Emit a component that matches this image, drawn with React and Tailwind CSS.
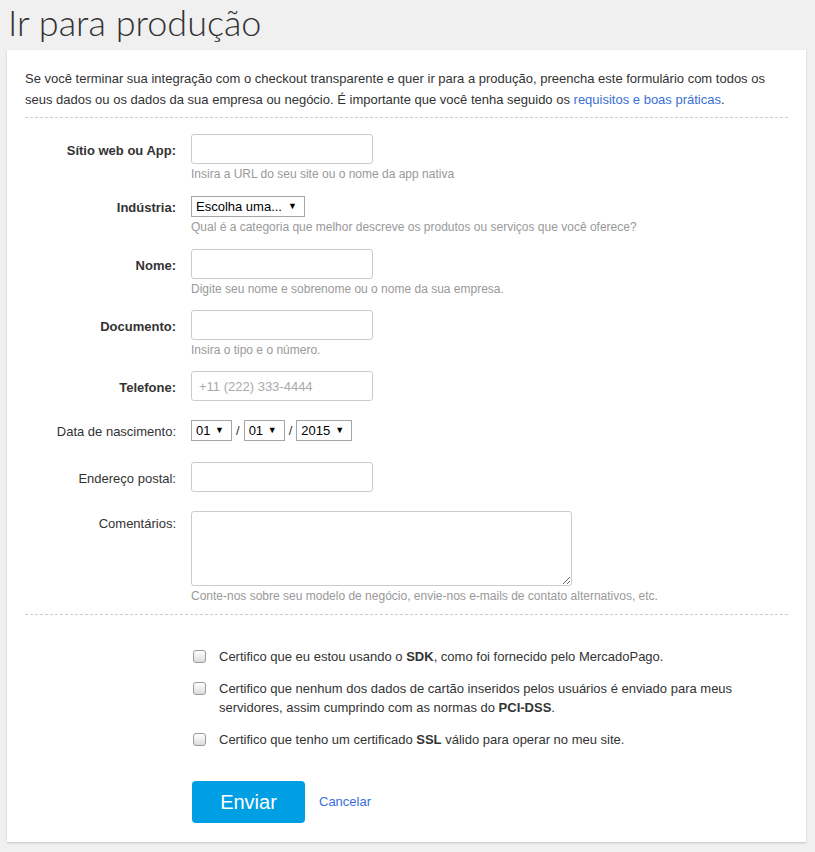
import React from "react";

const font = { fontFamily: '"Liberation Sans", Arial, sans-serif' };

function Help({ children }) {
  return <div className="mt-[2px] text-[12px] leading-[16px] text-[#999]">{children}</div>;
}

function TextInput({ placeholder }) {
  return (
    <input
      type="text"
      placeholder={placeholder}
      className="block w-[182px] h-[30px] rounded-[3px] border border-[#ccc] bg-white px-[7px] text-[13px] text-[#333] placeholder:text-[#aaa] outline-none"
    />
  );
}

function FakeSelect({ text, width }) {
  return (
    <div
      className={`flex h-[21px] items-center justify-between border border-[#a6a6a6] bg-white pl-[4px] pr-[7px] text-[13px] text-black ${width}`}
    >
      <span>{text}</span>
      <span className="text-[9px] leading-none">▼</span>
    </div>
  );
}

function Checkbox() {
  return (
    <span className="mt-[3px] ml-[2px] inline-block h-[13px] w-[13px] shrink-0 rounded-[3px] border border-[#9a9a9a] bg-gradient-to-b from-white to-[#dcdcdc]" />
  );
}

export default function App() {
  return (
    <div className="min-h-[852px] bg-[#f0f0f0] pb-[10px]" style={font}>
      <h1
        className="h-[50px] pl-[8px] text-[36px] font-light leading-[44px] text-[#333]"
        style={{ fontFamily: 'Lato, "Liberation Sans", sans-serif' }}
      >
        Ir para produção
      </h1>
      <div className="ml-[7px] w-[799px] bg-white px-[18px] pt-[18px] pb-[19px] shadow-[0_1px_2px_rgba(0,0,0,0.18)]">
        <p className="text-[13px] leading-[21px] text-[#333]">
          Se você terminar sua integração com o checkout transparente e quer ir para a produção, preencha este formulário com todos os seus dados ou os dados da sua empresa ou negócio. É importante que você tenha seguido os{" "}
          <a className="text-[#3a6fd6]">requisitos e boas práticas</a>.
        </p>
        <div className="mt-[7px] border-t border-dashed border-[#ccc]" />

        <div className="mt-[16px] flex gap-[15px]">
          <div className="w-[151px] shrink-0 pt-[7px] text-right text-[13px] font-bold text-[#333]">Sítio web ou App:</div>
          <div>
            <TextInput />
            <Help>Insira a URL do seu site ou o nome da app nativa</Help>
          </div>
        </div>

        <div className="mt-[14px] flex gap-[15px]">
          <div className="w-[151px] shrink-0 pt-[2px] text-right text-[13px] font-bold text-[#333]">Indústria:</div>
          <div>
            <FakeSelect text="Escolha uma..." width="w-[114px]" />
            <Help>Qual é a categoria que melhor descreve os produtos ou serviços que você oferece?</Help>
          </div>
        </div>

        <div className="mt-[14px] flex gap-[15px]">
          <div className="w-[151px] shrink-0 pt-[7px] text-right text-[13px] font-bold text-[#333]">Nome:</div>
          <div>
            <TextInput />
            <Help>Digite seu nome e sobrenome ou o nome da sua empresa.</Help>
          </div>
        </div>

        <div className="mt-[13px] flex gap-[15px]">
          <div className="w-[151px] shrink-0 pt-[7px] text-right text-[13px] font-bold text-[#333]">Documento:</div>
          <div>
            <TextInput />
            <Help>Insira o tipo e o número.</Help>
          </div>
        </div>

        <div className="mt-[13px] flex gap-[15px]">
          <div className="w-[151px] shrink-0 pt-[7px] text-right text-[13px] font-bold text-[#333]">Telefone:</div>
          <div>
            <TextInput placeholder="+11 (222) 333-4444" />
          </div>
        </div>

        <div className="mt-[19px] flex gap-[15px]">
          <div className="w-[151px] shrink-0 pt-[2px] text-right text-[13px] text-[#333]">Data de nascimento:</div>
          <div className="flex items-center">
            <FakeSelect text="01" width="w-[41px]" />
            <span className="mx-[4px] text-[13px] text-[#333]">/</span>
            <FakeSelect text="01" width="w-[41px]" />
            <span className="mx-[4px] text-[13px] text-[#333]">/</span>
            <FakeSelect text="2015" width="w-[56px]" />
          </div>
        </div>

        <div className="mt-[20px] flex gap-[15px]">
          <div className="w-[151px] shrink-0 pt-[7px] text-right text-[13px] text-[#333]">Endereço postal:</div>
          <div>
            <TextInput />
          </div>
        </div>

        <div className="mt-[19px] flex gap-[15px]">
          <div className="w-[151px] shrink-0 pt-[3px] text-right text-[13px] text-[#333]">Comentários:</div>
          <div>
            <textarea className="block h-[75px] w-[381px] rounded-[3px] border border-[#ccc] bg-white p-[6px] text-[13px] outline-none" />
            <Help>Conte-nos sobre seu modelo de negócio, envie-nos e-mails de contato alternativos, etc.</Help>
          </div>
        </div>

        <div className="mt-[10px] border-t border-dashed border-[#ccc]" />

        <div className="ml-[166px] mt-[32px] flex flex-col gap-[13px] text-[13px] leading-[19px] text-[#333]">
          <label className="flex gap-[13px]">
            <Checkbox />
            <span>
              Certifico que eu estou usando o <b>SDK</b>, como foi fornecido pelo MercadoPago.
            </span>
          </label>
          <label className="flex gap-[13px]">
            <Checkbox />
            <span>
              Certifico que nenhum dos dados de cartão inseridos pelos usuários é enviado para meus servidores, assim cumprindo com as normas do <b>PCI-DSS</b>.
            </span>
          </label>
          <label className="flex gap-[13px]">
            <Checkbox />
            <span>
              Certifico que tenho um certificado <b>SSL</b> válido para operar no meu site.
            </span>
          </label>
        </div>

        <div className="ml-[167px] mt-[32px] flex items-center gap-[14px]">
          <button className="h-[42px] w-[113px] rounded-[4px] bg-[#009ee3] text-[20px] text-white">Enviar</button>
          <a className="text-[13px] text-[#3a6fd6]">Cancelar</a>
        </div>
      </div>
    </div>
  );
}
